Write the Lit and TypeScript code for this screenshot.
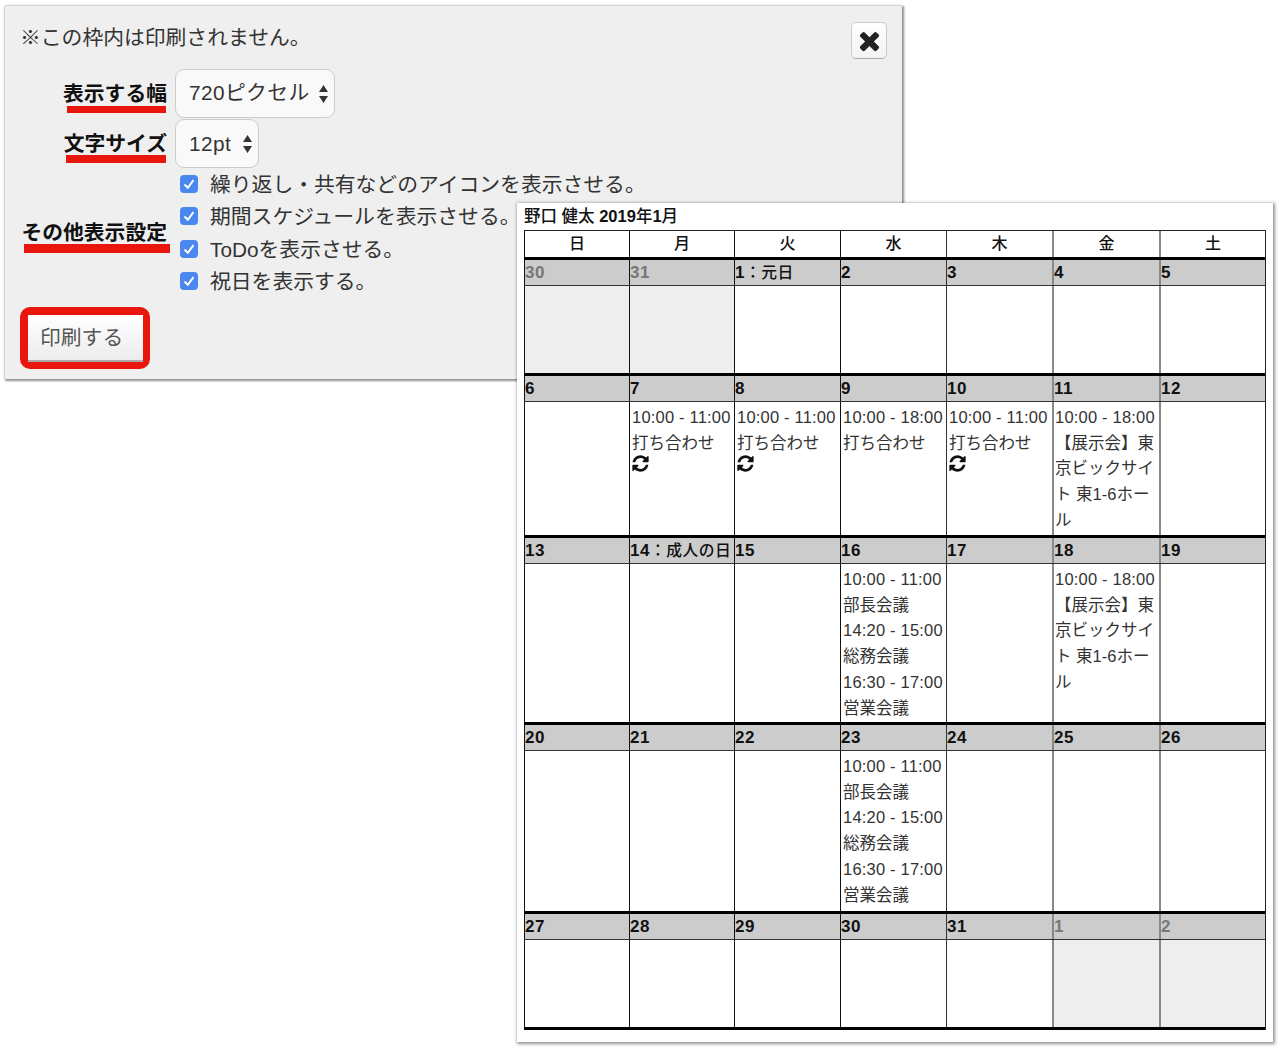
import { LitElement, html, css, svg } from "lit";
import { customElement } from "lit/decorators.js";

const X = svg`<path d="M1490 1322q0 40-28 68l-136 136q-28 28-68 28t-68-28l-294-294-294 294q-28 28-68 28t-68-28l-136-136q-28-28-28-68t28-68l294-294-294-294q-28-28-28-68t28-68l136-136q28-28 68-28t68 28l294 294 294-294q28-28 68-28t68 28l136 136q28 28 28 68t-28 68l-294 294 294 294q28 28 28 68z"/>`;
const REFRESH = svg`<path d="M1639 1056q0 5-1 7-64 268-268 434.5t-478 166.5q-146 0-282.5-55t-243.5-157l-129 129q-19 19-45 19t-45-19-19-45v-448q0-26 19-45t45-19h448q26 0 45 19t19 45-19 45l-137 137q71 66 161 102t187 36q134 0 250-65t186-179q11-17 53-117 8-23 30-23h192q13 0 22.5 9.5t9.5 22.5zm25-800v448q0 26-19 45t-45 19h-448q-26 0-45-19t-19-45 19-45l138-138q-148-137-349-137-134 0-250 65t-186 179q-11 17-53 117-8 23-30 23h-199q-13 0-22.5-9.5t-9.5-22.5v-7q65-268 270-434.5t480-166.5q146 0 284 55.5t245 156.5l130-129q19-19 45-19t45 19 19 45z"/>`;

type Day = { d: string; hol?: string; off?: boolean; lines?: string[]; repeat?: boolean };
const mtg = ["10:00 - 11:00", "打ち合わせ"];
const expo = ["10:00 - 18:00", "【展示会】東", "京ビックサイ", "ト 東1-6ホー", "ル"];
const busy = ["10:00 - 11:00", "部長会議", "14:20 - 15:00", "総務会議", "16:30 - 17:00", "営業会議"];

const weeks: { h: number; days: Day[] }[] = [
  { h: 87, days: [{ d: "30", off: true }, { d: "31", off: true }, { d: "1", hol: "：元日" }, { d: "2" }, { d: "3" }, { d: "4" }, { d: "5" }] },
  { h: 133, days: [
    { d: "6" }, { d: "7", lines: mtg, repeat: true }, { d: "8", lines: mtg, repeat: true },
    { d: "9", lines: ["10:00 - 18:00", "打ち合わせ"] }, { d: "10", lines: mtg, repeat: true },
    { d: "11", lines: expo }, { d: "12" }] },
  { h: 158, days: [{ d: "13" }, { d: "14", hol: "：成人の日" }, { d: "15" }, { d: "16", lines: busy }, { d: "17" }, { d: "18", lines: expo }, { d: "19" }] },
  { h: 160, days: [{ d: "20" }, { d: "21" }, { d: "22" }, { d: "23", lines: busy }, { d: "24" }, { d: "25" }, { d: "26" }] },
  { h: 87, days: [{ d: "27" }, { d: "28" }, { d: "29" }, { d: "30" }, { d: "31" }, { d: "1", off: true }, { d: "2", off: true }] },
];

const options = ["繰り返し・共有などのアイコンを表示させる。", "期間スケジュールを表示させる。", "ToDoを表示させる。", "祝日を表示する。"];

@customElement("app-root")
export class AppRoot extends LitElement {
  static styles = css`
    :host { display: block; position: relative; height: 1054px; background: #fff; overflow: hidden;
      font-family: "Liberation Sans", "Noto Sans CJK JP", sans-serif; color: #333; }
    .panel { box-sizing: border-box; width: 897px; height: 373px; margin: 6px 0 0 5px; padding: 17px 15px 0 15px;
      background: #efefef; box-shadow: 1px 1px 2px 1px rgba(0,0,0,.42), 0 0 3px rgba(0,0,0,.12); position: relative; }
    .note { font-size: 20.8px; line-height: 30px; height: 46px; white-space: nowrap; }
    .close { position: absolute; left: 846px; top: 16px; width: 36px; height: 37px; box-sizing: border-box; display: flex;
      align-items: center; justify-content: center; border: 1px solid #ccc; border-bottom-color: #aaa; border-radius: 5px;
      background: linear-gradient(#fff, #f3f3f3); }
    .close svg { width: 29px; height: 29px; fill: #222; }
    .row { display: flex; align-items: center; gap: 8px; margin-bottom: 1px; }
    .label { width: 147px; flex: none; display: flex; justify-content: flex-end; font-size: 20.8px; font-weight: 700; color: #111; }
    .label span { position: relative; line-height: 30px; white-space: nowrap; }
    .label span::after { content: ""; position: absolute; right: 1px; top: 27px; height: 7px; left: 4px; background: #e8160c; }
    .row.s .label span::after { left: 2px; top: 26.5px; height: 8px; }
    .row.o .label span::after { left: 2.5px; right: -3px; top: 26px; height: 9px; }
    .select { box-sizing: border-box; height: 49px; display: flex; align-items: center; gap: 8px; padding: 0 5px 0 13px;
      border: 1.5px solid #ccc; border-radius: 9px; background: #f9f9f9; font-size: 20.8px; letter-spacing: .4px; color: #333; white-space: nowrap; }
    .select.cjk { padding-bottom: 5px; }
    .select.cjk svg { margin-top: 5px; }
    .row.s .select { gap: 11px; }
    .select svg { width: 11px; height: 22px; fill: #333; }
    .opts { display: flex; flex-direction: column; margin: -2px 0 0 5px; }
    .opt { display: flex; align-items: center; gap: 12px; height: 32.3px; font-size: 20.8px; white-space: nowrap; color: #333; }
    .box { width: 18px; height: 18px; margin-top: 2px; border-radius: 4px; background: #4b87f0; display: flex; align-items: center; justify-content: center; flex: none; }
    .box svg { width: 14px; height: 14px; fill: none; stroke: #fff; stroke-width: 2; }
    .print { margin-top: 11px; display: block; border-style: solid; border-color: #e8160c; border-width: 8px 7px 7px 8px; border-radius: 10px; width: 130px; height: 62px; box-sizing: border-box; }
    .print .btn { height: 100%; box-sizing: border-box; padding: 0 0 3px 12px; display: flex; align-items: center; font-size: 20.8px; color: #555;
      background: linear-gradient(#fff, #ececec); border-bottom: 2px solid #aaa; }
    .win { position: absolute; left: 517px; top: 203px; width: 756px; height: 839px; box-sizing: border-box; padding: 1px 7px 0 7px;
      background: #fff; box-shadow: 1px 1px 3px 1px rgba(0,0,0,.42); }
    .title { font-size: 16.5px; font-weight: 500; line-height: 24px; color: #111; height: 26px; white-space: nowrap; }
    .cal { width: 742px; border-right: 1px solid #222; box-sizing: border-box; }
    .g { display: grid; grid-template-columns: 105px 105px 106px 106px 106px 107px 106px; }
    .g > div { border-left: 1px solid #111; box-sizing: border-box; }
    .g > div:nth-child(5) { border-left-color: #333; }
    .g > div:nth-child(6), .g > div:nth-child(7) { border-left: 2px solid #888; }
    .head { border-top: 1px solid #222; height: 26px; }
    .head div { text-align: center; font-size: 16px; font-weight: 500; line-height: 25px; color: #111; }
    .date { border-top: 3px solid #000; border-bottom: 1px solid #333; height: 25px; background: #ccc; }
    .date div { font-size: 17px; letter-spacing: .5px; font-weight: 700; line-height: 25px; color: #111; white-space: nowrap; overflow: hidden; }
    .date div.off { color: #777; }
    .hol { font-size: 15.8px; font-weight: 500; }
    .body div.c { padding: 3px 0 0 2px; font-size: 16.5px; line-height: 25.7px; color: #333; white-space: nowrap; }
    .body div.c:nth-child(6) { padding-left: 1px; }
    .body div.c.off { background: #eee; }
    .line { display: block; }
    .line.time { letter-spacing: .2px; }
    .rep { display: block; width: 19px; height: 19px; fill: #111; margin: -2px 0 0 -1px; }
    .end { border-top: 3px solid #000; }
  `;

  private chev() {
    return html`<svg viewBox="0 0 11 22"><path d="M5.5 2 L10 9 H1 Z M5.5 20 L1 13 H10 Z"/></svg>`;
  }

  render() {
    return html`
      <div class="panel">
        <div class="note">※この枠内は印刷されません。</div>
        <div class="close"><svg viewBox="0 0 1792 1792">${X}</svg></div>
        <div class="row"><div class="label"><span>表示する幅</span></div><div class="select cjk">720ピクセル ${this.chev()}</div></div>
        <div class="row s"><div class="label"><span>文字サイズ</span></div><div class="select">12pt ${this.chev()}</div></div>
        <div class="row o"><div class="label"><span>その他表示設定</span></div>
          <div class="opts">${options.map((o) => html`<div class="opt"><span class="box"><svg viewBox="0 0 14 14"><path d="M2.5 7.5 L5.8 10.8 L11.5 3.2"/></svg></span>${o}</div>`)}</div>
        </div>
        <div class="print"><div class="btn">印刷する</div></div>
      </div>
      <div class="win">
        <div class="title">野口 健太 <b>2019</b>年<b>1</b>月</div>
        <div class="cal">
          <div class="g head">${["日", "月", "火", "水", "木", "金", "土"].map((d) => html`<div>${d}</div>`)}</div>
          ${weeks.map((w) => html`
            <div class="g date">${w.days.map((d) => html`<div class=${d.off ? "off" : ""}>${d.d}${d.hol ? html`<span class="hol">${d.hol}</span>` : ""}</div>`)}</div>
            <div class="g body" style="height:${w.h}px">${w.days.map((d) => html`
              <div class="c ${d.off ? "off" : ""}">
                ${(d.lines ?? []).map((l) => html`<span class="line ${/^\d/.test(l) ? "time" : ""}">${l}</span>`)}
                ${d.repeat ? html`<svg class="rep" viewBox="0 0 1792 1792">${REFRESH}</svg>` : ""}
              </div>`)}</div>
          `)}
          <div class="end"></div>
        </div>
      </div>
    `;
  }
}
